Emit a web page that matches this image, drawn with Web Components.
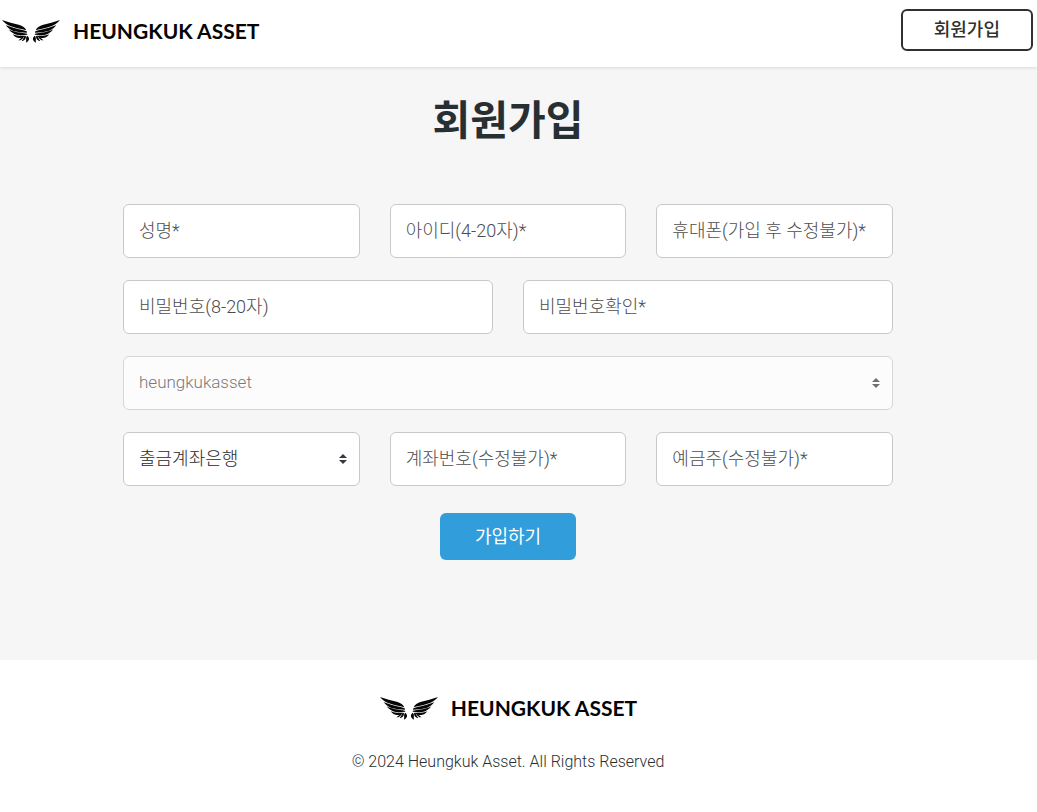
<!DOCTYPE html>
<html lang="ko">
<head>
<meta charset="utf-8">
<meta name="viewport" content="width=device-width, initial-scale=1">
<title>HEUNGKUK ASSET</title>
<style>
    body {
        margin: 0;
        background: #fff;
        color: #282f33;
        font-family: Roboto, 'Noto Sans CJK KR', sans-serif;
        font-size: 18px;
        font-weight: 300;
    }
</style>
</head>
<body>
<signup-page></signup-page>

<script>
class BrandLogo extends HTMLElement {
    constructor() {
        super();
        this.attachShadow({ mode: 'open' });
    }

    connectedCallback() {
        this.shadowRoot.innerHTML = `
            <style>
                :host {
                    display: inline-block;
                }
                a {
                    display: flex;
                    align-items: center;
                    gap: 12px;
                    color: #050505;
                    font-family: Lato, sans-serif;
                    font-size: 21px;
                    font-weight: 700;
                    line-height: 24px;
                    text-decoration: none;
                    white-space: nowrap;
                }
                svg {
                    width: 60px;
                    height: 24px;
                    fill: currentColor;
                }
            </style>
            <a href="#">
                <svg viewBox="3 27 180 72" aria-hidden="true">
                    <defs>
                        <g id="wing">
                            <path d="M6 30 L32 38 L56 44 C68 48 76 53 79 61 C64 57 48 54 33 49 C22 45 13 38 6 30Z"/>
                            <path d="M17 45 C34 53 62 58 80 64 L81 68 C67 67 51 66 38 62 C29 58 22 52 17 45Z"/>
                            <path d="M26 58 C40 66 62 69 81 71 L82 74 C72 75 63 76 53 75 C41 73 32 66 26 58Z"/>
                            <path d="M38 73 C50 78 63 78 77 77 C71 81 64 84 56 84 C48 83 42 79 38 73Z"/>
                            <path d="M55 91 C60 88 63 84 66 81 L71 80 C69 86 64 91 55 91Z"/>
                            <path d="M65 93 C70 89 70 84 73 79 L78 78 C78 86 74 93 65 93Z"/>
                            <path d="M78 98 C80 91 76 84 81 77 C91 83 88 93 78 98Z"/>
                        </g>
                    </defs>
                    <use href="#wing"/>
                    <use href="#wing" transform="translate(186 0) scale(-1 1)"/>
                </svg>
                <span>HEUNGKUK ASSET</span>
            </a>
        `;
    }
}

class TextField extends HTMLElement {
    constructor() {
        super();
        this.attachShadow({ mode: 'open' });
    }

    connectedCallback() {
        const label = this.getAttribute('label') || '';
        const type = this.getAttribute('type') || 'text';

        this.shadowRoot.innerHTML = `
            <style>
                :host {
                    display: block;
                    flex: 1;
                    min-width: 0;
                }
                input {
                    display: block;
                    width: 100%;
                    height: 54px;
                    box-sizing: border-box;
                    padding: 0 15px 2px;
                    border: 1px solid #c9c9c9;
                    border-radius: 6px;
                    background: #fff;
                    color: inherit;
                    font: inherit;
                }
                input::placeholder {
                    color: #4d4d4d;
                    opacity: 1;
                }
            </style>
            <input type="${type}" placeholder="${label}" aria-label="${label}">
        `;
    }
}

class SelectField extends HTMLElement {
    constructor() {
        super();
        this.attachShadow({ mode: 'open' });
    }

    connectedCallback() {
        const label = this.getAttribute('label') || '';
        const disabled = this.hasAttribute('disabled') ? 'disabled' : '';

        this.shadowRoot.innerHTML = `
            <style>
                :host {
                    display: block;
                    flex: 1;
                    min-width: 0;
                }
                .box {
                    position: relative;
                }
                .box.disabled {
                    opacity: 0.7;
                }
                select {
                    display: block;
                    width: 100%;
                    height: 54px;
                    box-sizing: border-box;
                    padding: 0 32px 2px 15px;
                    border: 1px solid #c9c9c9;
                    border-radius: 6px;
                    background: #fff;
                    color: #282828;
                    font: inherit;
                    appearance: none;
                }
                select:disabled {
                    color: #444;
                    font-size: 17px;
                    opacity: 1;
                }
                svg {
                    position: absolute;
                    top: 22px;
                    right: 13px;
                    width: 8px;
                    height: 10px;
                    fill: #343a40;
                    pointer-events: none;
                }
            </style>
            <div class="box ${disabled}">
                <select aria-label="${label}" ${disabled}>
                    <option>${label}</option>
                </select>
                <svg viewBox="0 0 4 5" aria-hidden="true"><path d="M2 0L0 2h4zm0 5L0 3h4z"/></svg>
            </div>
        `;
    }
}

class ActionButton extends HTMLElement {
    constructor() {
        super();
        this.attachShadow({ mode: 'open' });
    }

    connectedCallback() {
        this.shadowRoot.innerHTML = `
            <style>
                :host {
                    display: inline-block;
                }
                button {
                    display: block;
                    box-sizing: border-box;
                    height: 47px;
                    padding: 0 35px;
                    border: 0;
                    border-radius: 6px;
                    background: #319ddb;
                    color: #fff;
                    font: inherit;
                    font-weight: 400;
                    line-height: 24px;
                    cursor: pointer;
                }
                :host([outline]) button {
                    height: 42px;
                    padding: 0 31px;
                    border: 2px solid #303030;
                    background: #fff;
                    color: #303030;
                    font-weight: 500;
                }
            </style>
            <button type="button"><slot></slot></button>
        `;
    }
}

class SignupPage extends HTMLElement {
    constructor() {
        super();
        this.attachShadow({ mode: 'open' });
    }

    connectedCallback() {
        this.shadowRoot.innerHTML = `
            <style>
                :host {
                    display: block;
                }
                header {
                    position: relative;
                    display: flex;
                    justify-content: space-between;
                    align-items: flex-start;
                    padding: 9px 4px 16px 1px;
                    background: #fff;
                    box-shadow: 0 1px 3px rgba(0, 0, 0, 0.12);
                }
                header brand-logo {
                    margin-top: 10px;
                }
                main {
                    display: flex;
                    flex-direction: column;
                    align-items: center;
                    padding: 24px 144px 100px 123px;
                    background: #f6f6f6;
                }
                h1 {
                    margin: 0 0 53px;
                    font-size: 41px;
                    font-weight: 700;
                    line-height: 60px;
                }
                form {
                    display: flex;
                    flex-direction: column;
                    gap: 22px;
                    width: 100%;
                    max-width: 770px;
                }
                .row {
                    display: flex;
                    gap: 30px;
                }
                .submit {
                    display: flex;
                    justify-content: center;
                    margin-top: 5px;
                }
                footer {
                    display: flex;
                    flex-direction: column;
                    align-items: center;
                    gap: 30px;
                    padding: 36px 21px 38px 0;
                    background: #fff;
                }
                p {
                    margin: 0;
                    font-size: 16px;
                    line-height: 24px;
                }
            </style>
            <header>
                <brand-logo></brand-logo>
                <action-button outline>회원가입</action-button>
            </header>
            <main>
                <h1>회원가입</h1>
                <form>
                    <div class="row">
                        <text-field label="성명*"></text-field>
                        <text-field label="아이디(4-20자)*"></text-field>
                        <text-field label="휴대폰(가입 후 수정불가)*" type="tel"></text-field>
                    </div>
                    <div class="row">
                        <text-field label="비밀번호(8-20자)" type="password"></text-field>
                        <text-field label="비밀번호확인*" type="password"></text-field>
                    </div>
                    <div class="row">
                        <select-field label="heungkukasset" disabled></select-field>
                    </div>
                    <div class="row">
                        <select-field label="출금계좌은행"></select-field>
                        <text-field label="계좌번호(수정불가)*"></text-field>
                        <text-field label="예금주(수정불가)*"></text-field>
                    </div>
                    <div class="submit">
                        <action-button>가입하기</action-button>
                    </div>
                </form>
            </main>
            <footer>
                <brand-logo></brand-logo>
                <p>© 2024 Heungkuk Asset. All Rights Reserved</p>
            </footer>
        `;
    }
}

customElements.define('brand-logo', BrandLogo);
customElements.define('text-field', TextField);
customElements.define('select-field', SelectField);
customElements.define('action-button', ActionButton);
customElements.define('signup-page', SignupPage);
</script>
</body>
</html>
